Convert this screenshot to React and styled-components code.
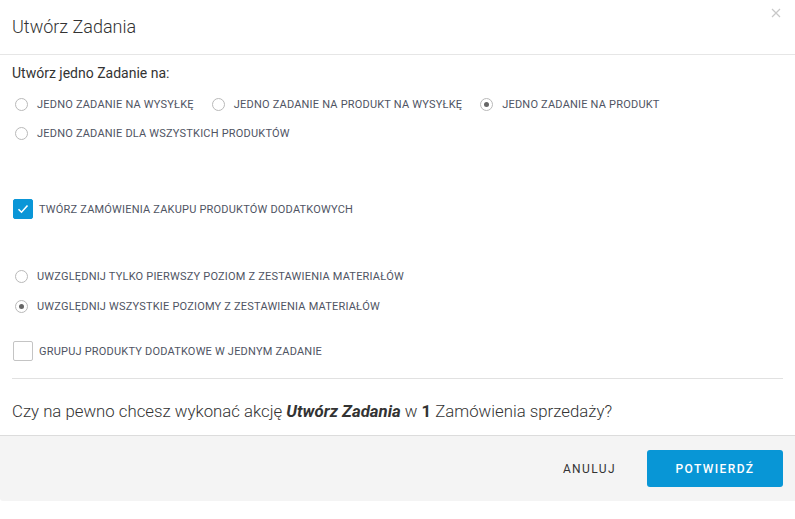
import { useState } from "react";
import styled, { createGlobalStyle } from "styled-components";

const GlobalStyle = createGlobalStyle`
  html, body {
    margin: 0;
    padding: 0;
    background: #fff;
  }
  body {
    font-family: Roboto, "Liberation Sans", sans-serif;
    color: #4d5260;
  }
`;

const Modal = styled.div`
  width: 795px;
  height: 519px;
  background: #fff;
  display: flex;
  flex-direction: column;
  position: relative;
`;

const Header = styled.div`
  height: 55px;
  box-sizing: border-box;
  border-bottom: 1px solid #e6e6e6;
  display: flex;
  align-items: center;
  padding: 0 12px 2px;
`;

const Title = styled.h1`
  margin: 0;
  font-size: 18px;
  font-weight: 300;
  color: #333;
`;

const Close = styled.button`
  position: absolute;
  top: 6px;
  right: 12px;
  border: 0;
  background: none;
  padding: 0;
  width: 14px;
  height: 14px;
  cursor: pointer;
`;

const Body = styled.div`
  padding: 8px 12px 0;
  display: flex;
  flex-direction: column;
`;

const Intro = styled.div`
  font-size: 14px;
  color: #333;
  height: 20px;
  line-height: 20px;
`;

const Group = styled.div`
  display: flex;
  flex-wrap: wrap;
  margin-top: ${(p) => p.$top || 0}px;
`;

const Option = styled.label`
  display: flex;
  align-items: center;
  height: ${(p) => p.$h || 29}px;
  margin-right: ${(p) => p.$mr || 0}px;
  flex-basis: ${(p) => (p.$full ? "100%" : "auto")};
  font-size: 11px;
  text-transform: uppercase;
  letter-spacing: 0.2px;
  color: #4f5463;
  cursor: pointer;
`;

const RadioDot = styled.span`
  width: 13px;
  height: 13px;
  box-sizing: border-box;
  border-radius: 50%;
  border: 1px solid #b9b9b9;
  margin: 0 9px 0 3px;
  display: flex;
  align-items: center;
  justify-content: center;
  flex-shrink: 0;
  &::after {
    content: "";
    width: 5px;
    height: 5px;
    border-radius: 50%;
    background: ${(p) => (p.$on ? "#666" : "transparent")};
  }
`;

const Box = styled.span`
  width: 20px;
  height: 20px;
  box-sizing: border-box;
  border-radius: 2px;
  border: 1px solid ${(p) => (p.$on ? "#0a96d7" : "#c4c4c4")};
  background: ${(p) => (p.$on ? "#0a96d7" : "#fff")};
  margin: 0 6px 0 1px;
  display: flex;
  align-items: center;
  justify-content: center;
  flex-shrink: 0;
`;

const Divider = styled.div`
  height: 1px;
  background: #e1e1e1;
  margin: ${(p) => p.$m || "0"};
`;

const Question = styled.p`
  margin: 0;
  padding-top: 8px;
  font-size: 16.8px;
  font-weight: 300;
  color: #333;
  height: 48px;
  line-height: 48px;
  b,
  em {
    font-weight: 700;
  }
`;

const Footer = styled.div`
  border-top: 1px solid #dcdcdc;
  background: #f4f4f4;
  height: 65px;
  display: flex;
  align-items: center;
  justify-content: flex-end;
  padding: 0 12px 0 0;
  border-bottom-left-radius: 3px;
`;

const GhostButton = styled.button`
  border: 0;
  background: none;
  font-family: inherit;
  font-size: 12px;
  letter-spacing: 1.4px;
  color: #333;
  padding: 0;
  margin-right: 31px;
  cursor: pointer;
`;

const PrimaryButton = styled.button`
  width: 136px;
  height: 37px;
  border: 0;
  border-radius: 3px;
  background: #0896d6;
  color: #fff;
  font-family: inherit;
  font-size: 12px;
  font-weight: 500;
  letter-spacing: 1.4px;
  cursor: pointer;
`;

const Radio = ({ checked, label, onSelect, ...rest }) => (
  <Option onClick={onSelect} {...rest}>
    <RadioDot $on={checked} />
    {label}
  </Option>
);

const Checkbox = ({ checked, label, onToggle, ...rest }) => (
  <Option onClick={onToggle} {...rest}>
    <Box $on={checked}>
      {checked && (
        <svg width="12" height="10" viewBox="0 0 12 10">
          <path d="M1.5 5.2 L4.5 8.2 L10.5 1.5" fill="none" stroke="#fff" strokeWidth="1.6" />
        </svg>
      )}
    </Box>
    {label}
  </Option>
);

const modes = [
  { id: "shipment", label: "Jedno zadanie na wysyłkę", mr: 15 },
  { id: "productShipment", label: "Jedno zadanie na produkt na wysyłkę", mr: 15 },
  { id: "product", label: "Jedno zadanie na produkt", mr: 0 },
  { id: "all", label: "Jedno zadanie dla wszystkich produktów", full: true },
];

const App = () => {
  const [mode, setMode] = useState("product");
  const [purchase, setPurchase] = useState(true);
  const [level, setLevel] = useState("all");
  const [group, setGroup] = useState(false);

  return (
    <>
      <GlobalStyle />
      <Modal>
        <Header>
          <Title>Utwórz Zadania</Title>
        </Header>
        <Close aria-label="close">
          <svg width="14" height="14" viewBox="0 0 14 14">
            <path d="M3 3 L11 11 M11 3 L3 11" stroke="#c8c8c8" strokeWidth="1.2" />
          </svg>
        </Close>
        <Body>
          <Intro>Utwórz jedno Zadanie na:</Intro>
          <Group $top={7}>
            {modes.map((m) => (
              <Radio
                key={m.id}
                label={m.label}
                checked={mode === m.id}
                onSelect={() => setMode(m.id)}
                $mr={m.mr}
                $full={m.full}
              />
            ))}
          </Group>
          <Group $top={51}>
            <Checkbox
              label="Twórz zamówienia zakupu produktów dodatkowych"
              checked={purchase}
              onToggle={() => setPurchase(!purchase)}
              $h={20}
            />
          </Group>
          <Group $top={42}>
            <Radio
              label="Uwzględnij tylko pierwszy poziom z zestawienia materiałów"
              checked={level === "first"}
              onSelect={() => setLevel("first")}
              $full
              $h={30}
            />
            <Radio
              label="Uwzględnij wszystkie poziomy z zestawienia materiałów"
              checked={level === "all"}
              onSelect={() => setLevel("all")}
              $full
              $h={30}
            />
          </Group>
          <Group $top={20}>
            <Checkbox
              label="Grupuj produkty dodatkowe w jednym zadanie"
              checked={group}
              onToggle={() => setGroup(!group)}
              $h={20}
            />
          </Group>
          <Divider $m="17px 0 0" />
          <Question>
            Czy na pewno chcesz wykonać akcję <em>Utwórz Zadania</em> w <b>1</b> Zamówienia sprzedaży?
          </Question>
        </Body>
        <Footer>
          <GhostButton>ANULUJ</GhostButton>
          <PrimaryButton>POTWIERDŹ</PrimaryButton>
        </Footer>
      </Modal>
    </>
  );
};

export default App;
